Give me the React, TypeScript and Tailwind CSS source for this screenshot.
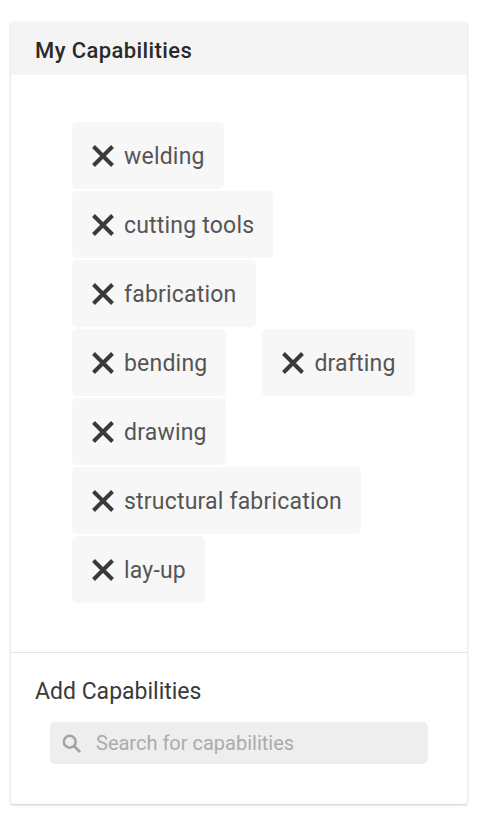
import React from 'react';

const rows: string[][] = [
  ['welding'],
  ['cutting tools'],
  ['fabrication'],
  ['bending', 'drafting'],
  ['drawing'],
  ['structural fabrication'],
  ['lay-up'],
];

const XIcon: React.FC = () => (
  <svg width="26" height="26" viewBox="0 0 26 26" className="flex-shrink-0">
    <path d="M3.5 3.5 L22.5 22.5 M22.5 3.5 L3.5 22.5" stroke="#3a3a3a" strokeWidth="4" strokeLinecap="butt" />
  </svg>
);

const Chip: React.FC<{ label: string }> = ({ label }) => (
  <div className="flex items-center gap-[8px] h-[67px] pl-[18px] pr-[19px] rounded-[5px] bg-[#f7f7f7]">
    <XIcon />
    <span className="pt-[3px] text-[23px] tracking-[0.2px] text-[#555555]">{label}</span>
  </div>
);

export default function App() {
  return (
    <div className="min-h-[818px] bg-white pt-[22px] px-[11px] font-['Roboto',sans-serif]">
      <div className="w-[456px] bg-white rounded-[3px] shadow-[0_1px_3px_rgba(0,0,0,0.22)] overflow-hidden">
        <div className="h-[53px] bg-[#f4f4f4] flex items-center px-[24px] pt-[4px]">
          <h2 className="text-[22px] font-medium tracking-[0.4px] text-[#2a2a2a]">My Capabilities</h2>
        </div>

        {/* selected chips */}
        <div className="pl-[61px] pt-[47px] pb-[49px] flex flex-col gap-[2px]">
          {rows.map((row, i) => (
            <div key={i} className="flex gap-[36px]">
              {row.map(label => (
                <Chip key={label} label={label} />
              ))}
            </div>
          ))}
        </div>

        <div className="border-t border-[#e6e6e6] px-[24px] pt-[25px] pb-[40px]">
          <h3 className="text-[23px] leading-[27px] text-[#3a3a3a]">Add Capabilities</h3>
          <div className="mt-[17px] ml-[15px] w-[378px] h-[42px] bg-[#eeeeee] rounded-[5px] flex items-center pl-[11px] pr-[12px] gap-[14px]">
            <svg width="21" height="21" viewBox="0 0 24 24" fill="none" className="flex-shrink-0">
              <circle cx="10" cy="10" r="6.8" stroke="#a3a3a3" strokeWidth="2.8" />
              <path d="M15 15 L21 21" stroke="#a3a3a3" strokeWidth="3.2" strokeLinecap="round" />
            </svg>
            <input
              className="flex-1 min-w-0 bg-transparent outline-none text-[20px] text-[#555] placeholder:text-[#ababab]"
              placeholder="Search for capabilities"
            />
          </div>
        </div>
      </div>
    </div>
  );
}
